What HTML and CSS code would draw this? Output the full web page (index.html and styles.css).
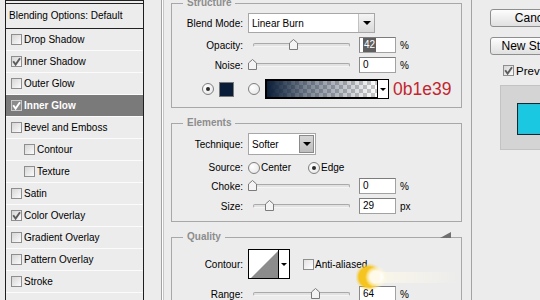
FILE: index.html
```html
<!DOCTYPE html>
<html lang="en">
<head>
  <meta charset="UTF-8">
  <title>Layer Style - Inner Glow</title>
  <link rel="stylesheet" href="styles.css">
</head>
<body>
  <div class="styles-list">
    <div class="list-top"></div>
    <div class="list-head">Blending Options: Default</div>
    <div class="style-row"><span class="check"></span>Drop Shadow</div>
    <div class="style-row"><span class="check"><svg viewBox="0 0 9 9"><path d="M1.2 4.2 L3.6 7.6 L8 1.2"/></svg></span>Inner Shadow</div>
    <div class="style-row"><span class="check"></span>Outer Glow</div>
    <div class="style-row active"><span class="check"><svg viewBox="0 0 9 9"><path d="M1.2 4.2 L3.6 7.6 L8 1.2"/></svg></span>Inner Glow</div>
    <div class="style-row"><span class="check"></span>Bevel and Emboss</div>
    <div class="style-row sub"><span class="check"></span>Contour</div>
    <div class="style-row sub"><span class="check"></span>Texture</div>
    <div class="style-row"><span class="check"></span>Satin</div>
    <div class="style-row"><span class="check"><svg viewBox="0 0 9 9"><path d="M1.2 4.2 L3.6 7.6 L8 1.2"/></svg></span>Color Overlay</div>
    <div class="style-row"><span class="check"></span>Gradient Overlay</div>
    <div class="style-row"><span class="check"></span>Pattern Overlay</div>
    <div class="style-row"><span class="check"></span>Stroke</div>
    <div class="style-row"></div>
  </div>

  <div class="panel">
    <fieldset class="group first">
      <legend>Structure</legend>
      <div class="field">
        <span class="field-label">Blend Mode:</span>
        <div class="dropdown blend">
          <span class="dd-text">Linear Burn</span>
          <span class="dd-btn"><i class="tri"></i></span>
        </div>
      </div>
      <div class="field gap4">
        <span class="field-label">Opacity:</span>
        <div class="slider"><div class="track"></div><span class="thumb" style="left: 40px"><svg viewBox="0 0 9 11"><path d="M0.5 4 L4.5 0.5 L8.5 4 V10.5 H0.5 Z"/></svg></span></div>
        <span class="num"><span class="picked">42</span></span>
        <span class="unit">%</span>
      </div>
      <div class="field gap4">
        <span class="field-label">Noise:</span>
        <div class="slider"><div class="track"></div><span class="thumb" style="left: -1px"><svg viewBox="0 0 9 11"><path d="M0.5 4 L4.5 0.5 L8.5 4 V10.5 H0.5 Z"/></svg></span></div>
        <span class="num">0</span>
        <span class="unit">%</span>
      </div>
      <div class="field color-row">
        <span class="radio on"></span>
        <span class="swatch"></span>
        <span class="radio second"></span>
        <div class="gradient">
          <span class="grad-fill"></span>
          <span class="grad-btn"><i class="tri small"></i></span>
        </div>
        <span class="hex">0b1e39</span>
      </div>
    </fieldset>

    <fieldset class="group elements">
      <legend>Elements</legend>
      <div class="field">
        <span class="field-label">Technique:</span>
        <div class="dropdown technique">
          <span class="dd-text">Softer</span>
          <span class="dd-btn dark"><i class="tri"></i></span>
        </div>
      </div>
      <div class="field source">
        <span class="field-label">Source:</span>
        <span class="radio"></span><span class="opt">Center</span>
        <span class="radio edge on"></span><span class="opt">Edge</span>
      </div>
      <div class="field gap3">
        <span class="field-label">Choke:</span>
        <div class="slider"><div class="track"></div><span class="thumb" style="left: -1px"><svg viewBox="0 0 9 11"><path d="M0.5 4 L4.5 0.5 L8.5 4 V10.5 H0.5 Z"/></svg></span></div>
        <span class="num">0</span>
        <span class="unit">%</span>
      </div>
      <div class="field gap4">
        <span class="field-label">Size:</span>
        <div class="slider"><div class="track"></div><span class="thumb" style="left: 16px"><svg viewBox="0 0 9 11"><path d="M0.5 4 L4.5 0.5 L8.5 4 V10.5 H0.5 Z"/></svg></span></div>
        <span class="num">29</span>
        <span class="unit">px</span>
      </div>
    </fieldset>

    <fieldset class="group quality">
      <legend>Quality</legend>
      <div class="field">
        <span class="field-label">Contour:</span>
        <div class="contour">
          <svg class="curve" viewBox="0 0 29 28"><polygon points="2,28 29,1 29,28"/></svg>
          <span class="curve-btn"><i class="tri small"></i></span>
        </div>
        <span class="check aa"></span><span class="opt">Anti-aliased</span>
      </div>
      <div class="field gap7">
        <span class="field-label">Range:</span>
        <div class="slider"><div class="track"></div><span class="thumb" style="left: 62px"><svg viewBox="0 0 9 11"><path d="M0.5 4 L4.5 0.5 L8.5 4 V10.5 H0.5 Z"/></svg></span></div>
        <span class="num">64</span>
        <span class="unit">%</span>
      </div>
    </fieldset>

    <svg class="grip" viewBox="0 0 11 6"><polygon points="0,6 11,0 11,6"/></svg>
    <div class="glow"></div>
  </div>

  <div class="side">
    <div class="btn">Cancel</div>
    <div class="btn next">New Style...</div>
    <div class="preview-toggle">
      <span class="check"><svg viewBox="0 0 9 9"><path d="M1.2 4.2 L3.6 7.6 L8 1.2"/></svg></span>Preview
    </div>
    <div class="preview-box"><span class="preview-swatch"></span></div>
  </div>
</body>
</html>
```

FILE: styles.css
```css
* { box-sizing: border-box; }
body {
  margin: 0;
  height: 300px;
  overflow: hidden;
  display: flex;
  background: #ececec;
  font-family: "Liberation Sans", Arial, sans-serif;
  font-size: 10px;
  color: #000;
}

/* left list of styles */
.styles-list {
  flex: none;
  width: 139px;
  margin-left: 5px;
  border-left: 1px solid #1e1e1e;
  border-right: 1px solid #1e1e1e;
}
.list-top {
  height: 4px;
  border-top: 1px solid #222;
  border-bottom: 1px solid #222;
}
.list-head {
  height: 25px;
  line-height: 24px;
  padding-left: 3px;
  border-bottom: 1px solid #222;
}
.style-row {
  height: 22px;
  display: flex;
  align-items: center;
  gap: 2px;
  padding-left: 5px;
  padding-bottom: 1px;
  border-bottom: 1px solid #fbfbfb;
}
.style-row.sub { padding-left: 18px; }
.style-row.active {
  background: #7a7a7a;
  color: #fff;
  font-weight: bold;
}

.check {
  flex: none;
  width: 11px;
  height: 11px;
  border: 1px solid #8e8e8e;
  background: linear-gradient(135deg, #d6d6d6, #fbfbfb);
  display: flex;
  align-items: center;
  justify-content: center;
}
.check svg { width: 9px; height: 9px; }
.check path { fill: none; stroke: #5c5c5c; stroke-width: 1.9; }
.active .check { background: #8c8c8c; border-color: #c9c9c9; }
.active .check path { stroke: #fff; }

/* middle panel */
.panel {
  position: relative;
  flex: none;
  width: 311px;
  margin-left: 17px;
  padding: 0 9px;
  border-left: 1px solid #a3a3a3;
  border-right: 1px solid #a3a3a3;
  box-shadow: inset 1px 0 #fff, inset 2px 0 #c6c6c6;
  display: flex;
  flex-direction: column;
  gap: 9px;
}
.group {
  margin: 0;
  min-width: 0;
  padding: 4px 0 8px;
  border: 1px solid #a8a8a8;
}
.group.first { margin-top: -3px; }
.group.elements { padding-bottom: 7px; }
.group.quality { padding-top: 6px; min-height: 90px; }
.group legend {
  margin-left: 11px;
  padding: 0 4px;
  font-weight: bold;
  line-height: 12px;
  color: #8d8d8d;
}

.field {
  display: flex;
  align-items: center;
}
.field.gap3 { margin-top: 3px; }
.field.gap4 { margin-top: 4px; }
.field.gap7 { margin-top: 7px; }
.field-label {
  flex: none;
  width: 71px;
  margin-right: 5px;
  text-align: right;
}

.dropdown {
  display: flex;
  height: 20px;
  border: 1px solid #a7a7a7;
  background: #fff;
}
.dropdown.blend { width: 127px; }
.dropdown.technique { width: 68px; height: 22px; }
.dd-text {
  flex: 1;
  padding-left: 3px;
  display: flex;
  align-items: center;
}
.dd-btn {
  width: 16px;
  display: flex;
  align-items: center;
  justify-content: center;
  border-left: 1px solid #c2c2c2;
  background: linear-gradient(#f5f5f5, #d9d9d9);
}
.dd-btn.dark {
  width: 15px;
  margin: 1px;
  border: 1px solid #8a8a8a;
  background: linear-gradient(#d6d6d6, #bdbdbd);
}
.tri {
  width: 0;
  height: 0;
  border-left: 4px solid transparent;
  border-right: 4px solid transparent;
  border-top: 4px solid #000;
}
.tri.small {
  border-left-width: 3px;
  border-right-width: 3px;
  border-top-width: 3px;
}

.slider {
  position: relative;
  flex: none;
  width: 97px;
  height: 16px;
  margin: 0 9px 0 5px;
  display: flex;
  align-items: center;
}
.track {
  flex: 1;
  height: 4px;
  border: 1px solid #a9a9a9;
  border-bottom-color: #f4f4f4;
  border-radius: 2px;
  background: #e2e2e2;
}
.thumb {
  position: absolute;
  top: 2px;
  width: 9px;
  height: 11px;
  margin-left: -4px;
}
.thumb svg { display: block; width: 9px; height: 11px; }
.thumb path { fill: #f4f4f4; stroke: #7b7b7b; stroke-width: 1; }

.num {
  flex: none;
  width: 37px;
  height: 16px;
  padding-left: 3px;
  line-height: 14px;
  border: 1px solid #a2a2a2;
  border-top-color: #7c7c7c;
  border-left-color: #8a8a8a;
  background: #fff;
}
.picked {
  display: inline-block;
  padding: 0 1px;
  background: #5f5f5f;
  color: #fff;
}
.unit { margin-left: 4px; }

.color-row {
  margin-top: 6px;
  height: 20px;
  padding-left: 30px;
}
.radio {
  flex: none;
  width: 12px;
  height: 12px;
  border: 1px solid #7e7e7e;
  border-radius: 50%;
  background: radial-gradient(circle at 35% 35%, #fff, #e3e3e3);
  display: flex;
  align-items: center;
  justify-content: center;
}
.radio.on::after {
  content: "";
  width: 4px;
  height: 4px;
  border-radius: 50%;
  background: #2b2b2b;
}
.swatch {
  flex: none;
  width: 15px;
  height: 15px;
  margin-left: 5px;
  border: 1px solid #7a7a7a;
  background: #0b1e39;
}
.radio.second { margin-left: 14px; }
.gradient {
  flex: none;
  display: flex;
  width: 124px;
  height: 20px;
  margin-left: 5px;
  border: 1px solid #000;
  box-shadow: inset 0 0 0 1px #000;
}
.grad-fill {
  flex: 1;
  margin: 1px 0 1px 1px;
  background:
    linear-gradient(to right, #0b1e39, rgba(11, 30, 57, 0.55) 35%, rgba(11, 30, 57, 0)),
    repeating-conic-gradient(#c9c9c9 0 25%, #fff 0 50%) 0 0 / 8px 8px;
}
.grad-btn {
  width: 11px;
  display: flex;
  align-items: center;
  justify-content: center;
  border-left: 1px solid #000;
  background: #fff;
}
.hex {
  margin-left: 4px;
  font-size: 17.5px;
  line-height: 20px;
  color: #c3262f;
}

.source {
  margin-top: 5px;
  height: 15px;
}
.opt { margin-left: 1px; }
.radio.edge { margin-left: 17px; }

.contour {
  flex: none;
  display: flex;
  width: 42px;
  height: 30px;
  border: 1px solid #000;
  background: #fff;
}
.curve { width: 29px; height: 28px; display: block; }
.curve polygon { fill: #8c8c8c; }
.curve-btn {
  flex: 1;
  display: flex;
  align-items: center;
  justify-content: center;
  border-left: 1px solid #000;
}
.check.aa { margin-left: 13px; background: linear-gradient(135deg, #e2e2e2, #fff); }

.grip {
  position: absolute;
  left: 278px;
  top: 232px;
  width: 11px;
  height: 6px;
}
.grip polygon { fill: #6f6f6f; }
.glow {
  position: absolute;
  left: 194px;
  top: 262px;
  width: 104px;
  height: 30px;
  pointer-events: none;
  background:
    radial-gradient(circle at 20px 15px, rgba(255, 255, 255, 0.9) 0 6px, rgba(255, 248, 215, 0.5) 9px, rgba(255, 248, 215, 0) 11px),
    radial-gradient(circle at 13px 15px, #f5c41f 0 10px, rgba(245, 196, 31, 0.35) 12px, rgba(245, 196, 31, 0) 14px),
    linear-gradient(to right, rgba(255, 251, 232, 0.7), rgba(255, 251, 232, 0)) 20px 10px / 84px 11px no-repeat;
}

/* right column */
.side {
  flex: none;
  padding: 9px 0 0 18px;
}
.btn {
  width: 87px;
  height: 18px;
  border: 1px solid #8e8e8e;
  border-radius: 3px;
  background: linear-gradient(#fdfdfd, #e0e0e0);
  font-size: 12px;
  line-height: 16px;
  text-align: center;
}
.btn.next { margin-top: 10px; }
.preview-toggle {
  display: flex;
  align-items: center;
  gap: 2px;
  margin: 10px 0 0 13px;
  height: 11px;
  font-size: 11.5px;
}
.preview-box {
  width: 80px;
  height: 65px;
  margin: 9px 0 0 10px;
  padding: 17px 0 0 16px;
  border: 1px solid #c3c3c3;
  background: #d4d4d4;
}
.preview-swatch {
  display: block;
  width: 40px;
  height: 32px;
  border: 1px solid #0a2d3c;
  box-shadow: inset 0 0 0 1px #3fb5c8;
  background: #1bc8e2;
}
```
